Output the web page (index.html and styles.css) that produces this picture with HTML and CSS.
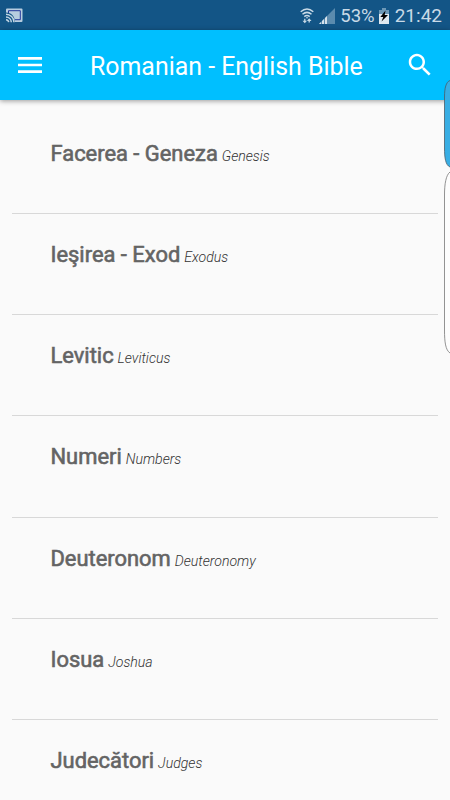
FILE: index.html
```html
<!DOCTYPE html>
<html lang="en">
<head>
    <meta charset="UTF-8">
    <meta name="viewport" content="width=device-width, initial-scale=1.0">
    <title>Romanian - English Bible</title>
    <link rel="stylesheet" href="styles.css">
</head>
<body>
    <div class="status-bar">
        <svg class="cast-icon" width="17" height="15" viewBox="0 0 17 15">
            <path d="M1 .5h14.500q1 0 1 1v11.500q0 1-1 1H8C8 9 5 5.500 0 5V1.500q0-1 1-1z" fill="#b7cddf"/>
            <path d="M2.500 5V2.700h11.800v9H9" fill="none" stroke="#23389a" stroke-width="1"/>
            <path d="M0 4.500c5.500 0 9 4 9 10.500H0z" fill="#135586"/>
            <path d="M0 6.200a8 8 0 0 1 8 8M0 9a5.400 5.400 0 0 1 5.300 5.200M0 11.700a3 3 0 0 1 2.700 2.500" fill="none" stroke="#c3d6e5" stroke-width="1.500"/>
        </svg>
        <div class="status-right">
            <svg class="wifi-icon" width="14" height="16" viewBox="0 0 14 16">
                <path d="M.7 3.800Q7-1.700 13.300 3.800M2.500 6.300q4.500-3.800 9 0M4.300 8.600q2.700-2.200 5.400 0" fill="none" stroke="#c9dae7" stroke-width="1.500"/>
                <path d="M5.800 9.300h2.400L7 10.700z" fill="#c9dae7"/>
                <path d="M4.800 10.800v3M9.200 11.500v3" stroke="#c9dae7" stroke-width="1.300"/>
                <path d="M2.500 12.800h4.600L4.800 15.300zM6.900 12.900h4.600L9.200 10.300z" fill="#c9dae7"/>
            </svg>
            <svg class="signal-icon" width="16" height="16" viewBox="0 0 16 16">
                <path d="M0 16L16 0v16z" fill="#5b8bae"/>
                <path d="M0 16l2-2v2zM3 16v-3l2-2v5zM6 16v-6l2-2v8z" fill="#d5e2ec"/>
            </svg>
            <span class="battery-text">53%</span>
            <svg class="battery-icon" width="10" height="16" viewBox="0 0 10 16">
                <path d="M3 0h4v2h3v4H0V2h3z" fill="#6c98b7"/>
                <path d="M0 6h10v10H0z" fill="#e0e9f0"/>
                <path d="M6.500 2.500L1.300 9h3L2.500 13.500 9 7H5.700z" fill="#000"/>
            </svg>
            <span class="clock">21:42</span>
        </div>
    </div>

    <header class="app-bar">
        <svg class="menu-icon" width="24" height="16" viewBox="0 0 24 16">
            <path d="M0 0h24v2.700H0zM0 6.650h24v2.700H0zM0 13.300h24V16H0z" fill="#fff"/>
        </svg>
        <h1>Romanian - English Bible</h1>
        <svg class="search-icon" width="30" height="30" viewBox="0 0 24 24">
            <path d="M15.500 14h-.79l-.28-.27C15.410 12.590 16 11.110 16 9.500 16 5.910 13.090 3 9.500 3S3 5.910 3 9.500 5.910 16 9.500 16c1.610 0 3.090-.59 4.230-1.570l.27.28v.79l5 4.990L20.490 19l-4.990-5zm-6 0C7.010 14 5 11.990 5 9.500S7.010 5 9.500 5 14 7.010 14 9.500 11.990 14 9.500 14z" fill="#fff"/>
        </svg>
    </header>

    <!-- lang stays en on the page: romanian locale swaps the cedilla in ş for a comma -->
    <ul class="book-list">
        <li><b>Facerea - Geneza</b> <i>Genesis</i></li>
        <li><b>Ieşirea - Exod</b> <i>Exodus</i></li>
        <li><b>Levitic</b> <i>Leviticus</i></li>
        <li><b>Numeri</b> <i>Numbers</i></li>
        <li><b>Deuteronom</b> <i>Deuteronomy</i></li>
        <li><b>Iosua</b> <i>Joshua</i></li>
        <li><b>Judecători</b> <i>Judges</i></li>
    </ul>

    <!-- edge panel handles over the right side -->
    <svg class="edge-panel" width="6" height="276" viewBox="0 0 6 276">
        <path d="M6 .5C2 2 .5 8 .5 17v51c0 10 1 17 5.500 19z" fill="#38aee4"/>
        <path d="M6 .5C2 2 .5 8 .5 17v51c0 10 1 17 5.500 19" fill="none" stroke="#4a5d68" stroke-width=".8"/>
        <path d="M6 92C2 95 .5 104 .5 115v135c0 12 1 20 5.500 23z" fill="#fdfdfd"/>
        <path d="M6 92C2 95 .5 104 .5 115v135c0 12 1 20 5.500 23" fill="none" stroke="#777" stroke-width=".8"/>
    </svg>
</body>
</html>
```
FILE: styles.css
```css
* {
    box-sizing: border-box;
}
body {
    font-family: Roboto, sans-serif;
    background-color: #fafafa;
    margin: 0;
    height: 800px;
    overflow: hidden;
    position: relative;
}
.status-bar {
    display: flex;
    justify-content: space-between;
    align-items: center;
    height: 30px;
    padding: 0 8px 0 6px;
    background-color: #135586;
    color: #c9dae7;
    font-size: 19px;
}
.status-right {
    display: flex;
    align-items: center;
    height: 30px;
    padding-top: 1px;
}
.signal-icon {
    margin: 0 5px;
}
.battery-text {
    font-size: 18.5px;
}
.battery-icon {
    margin: 0 6px 0 4px;
}
.app-bar {
    display: flex;
    align-items: center;
    height: 70px;
    padding: 0 15px 0 18px;
    background-color: #00bfff;
    color: #fff;
    box-shadow: 0 1px 5px rgba(0, 0, 0, 0.4);
}
h1 {
    flex: 1;
    margin: 2px 0 0 48px;
    font-size: 24.9px;
    font-weight: 400;
    white-space: nowrap;
}
.book-list {
    list-style: none;
    margin: 12.5px 12px 0;
    padding: 0;
}
.book-list li {
    height: 101.25px;
    padding: 27px 0 0 38.5px;
    border-bottom: 1px solid #d8d8d8;
    line-height: 28px;
    white-space: nowrap;
}
b {
    color: #646464;
    font-size: 21.9px;
    font-weight: 400;
    -webkit-text-stroke: 0.6px #646464;
}
i {
    color: #333;
    font-size: 14.1px;
    font-weight: 300;
}
.edge-panel {
    position: absolute;
    top: 80px;
    right: 0;
}
```
